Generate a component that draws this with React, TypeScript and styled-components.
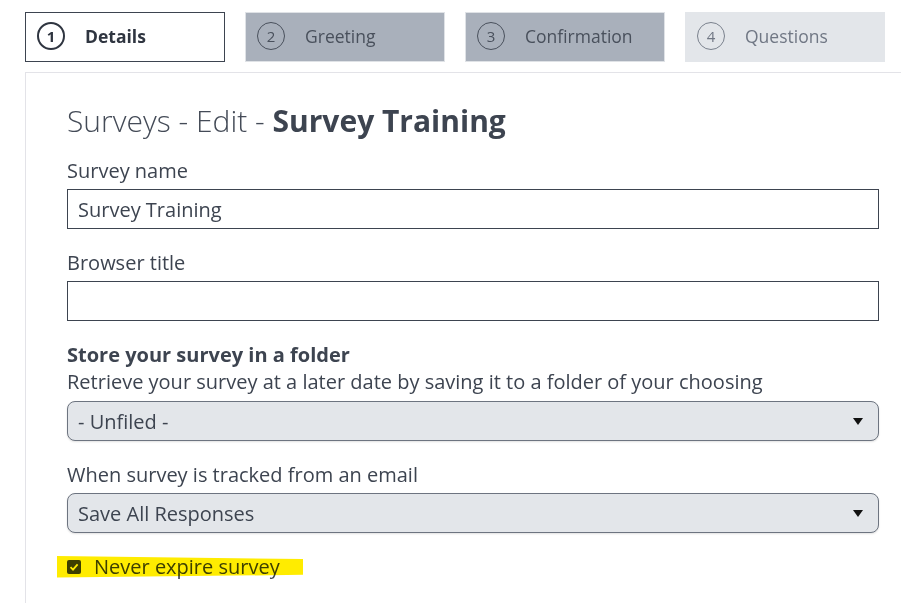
import React from "react";
import styled, { createGlobalStyle } from "styled-components";

const Global = createGlobalStyle`
  html, body { margin: 0; padding: 0; background: #fff; overflow: hidden; }
  body { font-family: "Open Sans", "Noto Sans", sans-serif; color: #3d4450; }
  * { box-sizing: border-box; }
`;

const Page = styled.div`
  padding: 12px 0 0 25px;
  width: 901px;
  height: 603px;
`;

const Steps = styled.div`
  display: flex;
  gap: 20px;
`;

type Variant = "active" | "done" | "todo";

const Step = styled.div<{ $variant: Variant }>`
  width: 200px;
  height: 50px;
  display: flex;
  align-items: center;
  padding: 0 0 2px 11px;
  gap: 20px;
  font-size: 17.5px;
  background: ${(p) => (p.$variant === "active" ? "#fff" : p.$variant === "done" ? "#a9b0bb" : "#e3e6ea")};
  border: 1px solid ${(p) => (p.$variant === "active" ? "#3d4450" : p.$variant === "done" ? "#dfe2e6" : "#e3e6ea")};
  color: ${(p) => (p.$variant === "active" ? "#2f3540" : p.$variant === "done" ? "#49505c" : "#707784")};
  font-weight: ${(p) => (p.$variant === "active" ? 700 : 400)};
`;

const Num = styled.span<{ $variant: Variant }>`
  width: 28px;
  height: 28px;
  border-radius: 50%;
  border: ${(p) => (p.$variant === "active" ? "2px solid #2f3540" : p.$variant === "done" ? "1px solid #49505c" : "1px solid #7a818d")};
  display: flex;
  align-items: center;
  justify-content: center;
  font-size: 15px;
  font-weight: ${(p) => (p.$variant === "active" ? 700 : 400)};
  flex: none;
`;

const Panel = styled.div`
  margin-top: 10px;
  border-top: 1px solid #e3e3e8;
  border-left: 1px solid #e3e3e8;
  padding: 28px 26px 0 41px;
  width: 880px;
  height: 540px;
`;

const Title = styled.h1`
  margin: 0 0 17px;
  font-size: 30px;
  font-weight: 300;
  line-height: 40px;
  color: #444b57;
  b { font-weight: 700; color: #3d4450; }
`;

const Field = styled.div`
  display: flex;
  flex-direction: column;
  margin-bottom: 21px;
`;

const Label = styled.label<{ $bold?: boolean }>`
  font-size: 20px;
  line-height: 26px;
  font-weight: ${(p) => (p.$bold ? 700 : 400)};
  color: #3d4450;
  margin-bottom: 5px;
`;

const Help = styled.div`
  font-size: 20px;
  line-height: 26px;
  color: #3d4450;
  margin: -4px 0 6px;
`;

const Input = styled.div`
  height: 40px;
  border: 1px solid #3d4450;
  display: flex;
  align-items: center;
  padding: 0 10px;
  font-size: 20px;
  color: #3d4450;
`;

const Select = styled.div`
  height: 40px;
  border: 1px solid #6d7480;
  border-radius: 8px;
  background: #e3e6ea;
  box-shadow: 0 1px 2px rgba(0, 0, 0, 0.12);
  display: flex;
  align-items: center;
  justify-content: space-between;
  padding: 0 15px 0 10px;
  font-size: 20px;
  color: #3d4450;
`;

const Caret = styled.span`
  width: 0;
  height: 0;
  border-left: 5px solid transparent;
  border-right: 5px solid transparent;
  border-top: 7px solid #111;
`;

const CheckRow = styled.div`
  position: relative;
  display: flex;
  align-items: center;
  gap: 13px;
  margin-top: -1px;
  font-size: 20px;
  line-height: 27px;
  color: #3d4450;
`;

const Box = styled.span`
  width: 14px;
  height: 14px;
  border-radius: 2px;
  background: #3d4450;
  display: flex;
  align-items: center;
  justify-content: center;
`;

const Highlight = styled.span`
  position: absolute;
  left: -10px;
  top: calc(50% - 11px);
  width: 246px;
  height: 22px;
  background: #ffec00;
  mix-blend-mode: multiply;
  clip-path: polygon(0 2%, 100% 16%, 100% 88%, 0 100%);
  pointer-events: none;
`;

export default function App() {
  return (
    <>
      <Global />
      <Page>
        <Steps>
          <Step $variant="active"><Num $variant="active">1</Num>Details</Step>
          <Step $variant="done"><Num $variant="done">2</Num>Greeting</Step>
          <Step $variant="done"><Num $variant="done">3</Num>Confirmation</Step>
          <Step $variant="todo"><Num $variant="todo">4</Num>Questions</Step>
        </Steps>
        <Panel>
          <Title>Surveys - Edit - <b>Survey Training</b></Title>
          <Field>
            <Label>Survey name</Label>
            <Input>Survey Training</Input>
          </Field>
          <Field>
            <Label>Browser title</Label>
            <Input />
          </Field>
          <Field>
            <Label $bold>Store your survey in a folder</Label>
            <Help>Retrieve your survey at a later date by saving it to a folder of your choosing</Help>
            <Select>- Unfiled -<Caret /></Select>
          </Field>
          <Field>
            <Label>When survey is tracked from an email</Label>
            <Select>Save All Responses<Caret /></Select>
          </Field>
          <CheckRow>
            <Box>
              <svg width="10" height="10" viewBox="0 0 10 10">
                <path d="M1.5 5.2 L4 7.6 L8.6 2.4" stroke="#fff" strokeWidth="1.8" fill="none" />
              </svg>
            </Box>
            Never expire survey
            <Highlight />
          </CheckRow>
        </Panel>
      </Page>
    </>
  );
}
